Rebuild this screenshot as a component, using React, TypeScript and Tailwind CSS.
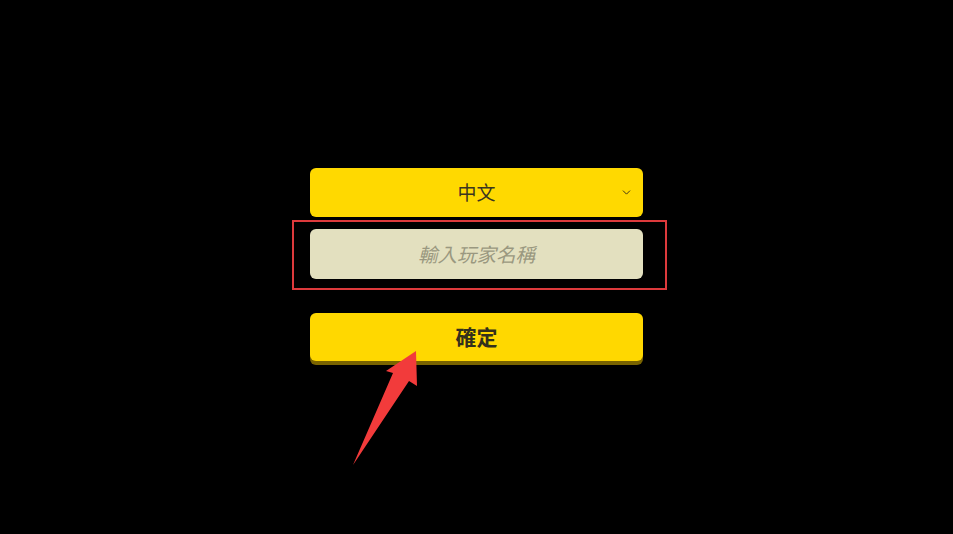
import { ChevronDown } from 'lucide-react'

const cjk = { fontFamily: '"Noto Sans CJK TC", "Noto Sans", sans-serif' }

export default function App() {
  return (
    <div className="relative min-h-[534px] w-full bg-black overflow-hidden" style={cjk}>
      <div className="mx-auto flex w-[333px] flex-col pt-[168px]">
        {/* Language select */}
        <div className="relative flex h-[49px] items-center justify-center rounded-md bg-[#ffd900]">
          <span className="text-[19px] text-[#3b3520]">中文</span>
          <ChevronDown className="absolute right-[10px] top-[18px] h-[13px] w-[13px] text-[#3d3418]" strokeWidth={1.8} />
        </div>

        {/* Name input */}
        <div className="relative mt-[12px]">
          <div className="flex h-[50px] items-center justify-center rounded-md bg-[#e3e0bf]">
            <span className="text-[19.5px] italic text-[#9a9880]">輸入玩家名稱</span>
          </div>
          <div className="pointer-events-none absolute left-[-18px] top-[-9px] h-[70px] w-[375px] border-2 border-[#dd3a3c]" />
        </div>

        {/* Confirm */}
        <div className="mt-[34px] flex h-[48px] items-center justify-center rounded-md bg-[#ffd800] shadow-[0_4px_0_#7a6400]">
          <span className="text-[21px] font-bold text-[#33301c]">確定</span>
        </div>
      </div>

      <svg className="absolute left-0 top-0" width="953" height="534" viewBox="0 0 953 534">
        <polygon
          points="416,351 417,386 409,381 353,465 393,373 386,371"
          fill="#f23b3b"
        />
      </svg>
    </div>
  )
}
